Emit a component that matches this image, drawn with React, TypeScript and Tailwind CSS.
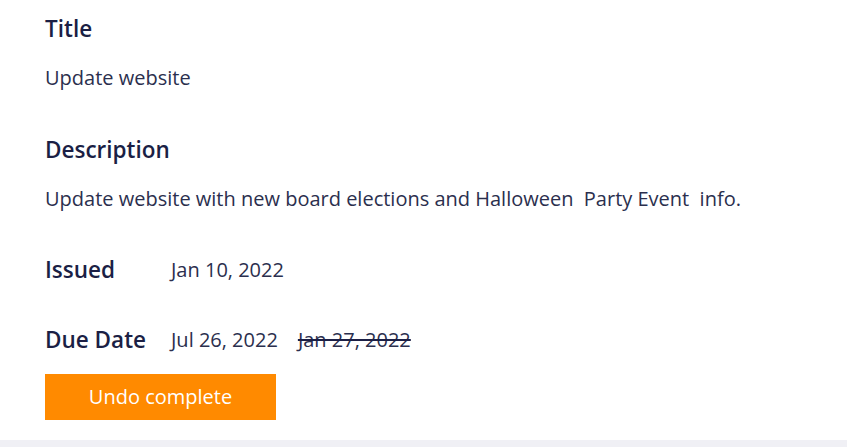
import React from 'react';

const font = { fontFamily: '"Open Sans", "Noto Sans", sans-serif' };

export default function App() {
  return (
    <div className="w-[847px] h-[447px] bg-white flex flex-col" style={font}>
      <div className="flex-1 pl-[45px] pt-[14px] flex flex-col">
        <h2 className="text-[22.5px] leading-[30px] font-semibold text-[#1b1f45]">Title</h2>
        <p className="mt-[20px] text-[20px] leading-[28px] text-[#2b2f4e]">Update website</p>

        <h2 className="mt-[43px] text-[22.5px] leading-[30px] font-semibold text-[#1b1f45]">Description</h2>
        <p className="mt-[20px] text-[20px] leading-[28px] text-[#2b2f4e] whitespace-pre">
          {'Update website with new board elections and Halloween  Party Event  info.'}
        </p>

        <div className="mt-[42px] flex items-center h-[30px]">
          <span className="w-[126px] text-[22.5px] leading-[30px] font-semibold text-[#1b1f45]">Issued</span>
          <span className="text-[20px] leading-[28px] text-[#2b2f4e]">Jan 10, 2022</span>
        </div>

        <div className="mt-[40px] flex items-center h-[30px]">
          <span className="w-[126px] text-[22.5px] leading-[30px] font-semibold text-[#1b1f45]">Due Date</span>
          <span className="text-[20px] leading-[28px] text-[#2b2f4e]">Jul 26, 2022</span>
          <span className="ml-[20px] text-[20px] leading-[28px] text-[#2b2f4e] line-through decoration-[#1b1f45]">Jan 27, 2022</span>
        </div>

        <button className="mt-[19px] w-[231px] h-[46px] bg-[#ff8a00] text-white text-[20px] leading-[28px]">
          Undo complete
        </button>
      </div>
      <div className="h-[7px] bg-[#f0f0f5]" />
    </div>
  );
}
